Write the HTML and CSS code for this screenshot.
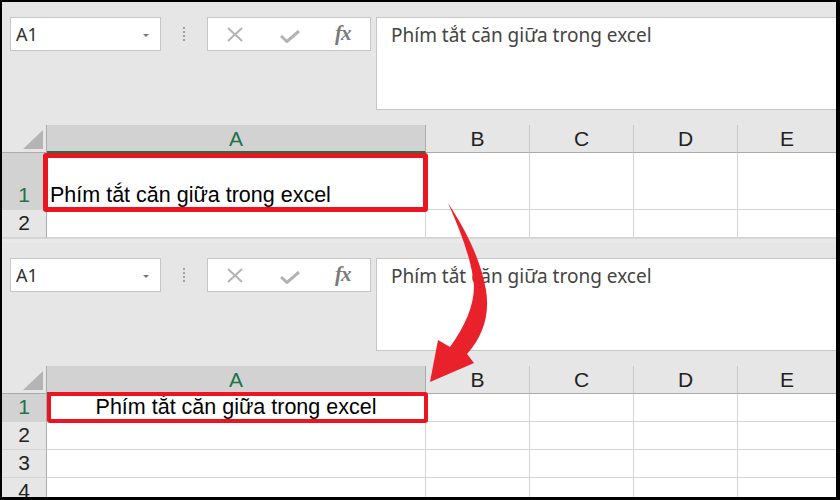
FILE: index.html
```html
<!DOCTYPE html>
<html>
<head>
<meta charset="utf-8">
<link rel="stylesheet" href="styles.css">
</head>
<body>
<div class="frame">
  <div class="panel panel-top">
    <div class="toolbar">
      <div class="namebox"><span class="ref">A1</span><span class="caret"></span></div>
      <div class="grip"><i></i><i></i><i></i><i></i></div>
      <div class="fxbox">
        <svg class="ico-x" width="18" height="15" viewBox="0 0 18 15"><path d="M2 1 L16 14 M16 1 L2 14" stroke="#b3b3b3" stroke-width="2" fill="none"/></svg>
        <svg class="ico-check" width="20" height="13" viewBox="0 0 20 13"><path d="M1 6 L7 11.5 L19 1" stroke="#b3b3b3" stroke-width="3" fill="none"/></svg>
        <span class="fx">fx</span>
      </div>
      <div class="formula">Phím tắt căn giữa trong excel</div>
    </div>
    <div class="grid grid-top">
      <div class="corner"><span class="tri"></span></div>
      <div class="colh sel">A</div>
      <div class="colh">B</div>
      <div class="colh">C</div>
      <div class="colh">D</div>
      <div class="colh last">E</div>

      <div class="rowh sel">1</div>
      <div class="cell a1 a1-top">Phím tắt căn giữa trong excel</div>
      <div class="cell"></div>
      <div class="cell"></div>
      <div class="cell"></div>
      <div class="cell last"></div>

      <div class="rowh">2</div>
      <div class="cell"></div>
      <div class="cell"></div>
      <div class="cell"></div>
      <div class="cell"></div>
      <div class="cell last"></div>
    </div>
  </div>

  <div class="panel panel-bottom">
    <div class="toolbar">
      <div class="namebox"><span class="ref">A1</span><span class="caret"></span></div>
      <div class="grip"><i></i><i></i><i></i><i></i></div>
      <div class="fxbox">
        <svg class="ico-x" width="18" height="15" viewBox="0 0 18 15"><path d="M2 1 L16 14 M16 1 L2 14" stroke="#b3b3b3" stroke-width="2" fill="none"/></svg>
        <svg class="ico-check" width="20" height="13" viewBox="0 0 20 13"><path d="M1 6 L7 11.5 L19 1" stroke="#b3b3b3" stroke-width="3" fill="none"/></svg>
        <span class="fx">fx</span>
      </div>
      <div class="formula">Phím tắt căn giữa trong excel</div>
    </div>
    <div class="grid grid-bottom">
      <div class="corner"><span class="tri"></span></div>
      <div class="colh sel">A</div>
      <div class="colh">B</div>
      <div class="colh">C</div>
      <div class="colh">D</div>
      <div class="colh last">E</div>

      <div class="rowh sel">1</div>
      <div class="cell a1 a1-bottom center">Phím tắt căn giữa trong excel</div>
      <div class="cell"></div>
      <div class="cell"></div>
      <div class="cell"></div>
      <div class="cell last"></div>

      <div class="rowh">2</div>
      <div class="cell"></div>
      <div class="cell"></div>
      <div class="cell"></div>
      <div class="cell"></div>
      <div class="cell last"></div>

      <div class="rowh">3</div>
      <div class="cell"></div>
      <div class="cell"></div>
      <div class="cell"></div>
      <div class="cell"></div>
      <div class="cell last"></div>

      <div class="rowh">4</div>
      <div class="cell"></div>
      <div class="cell"></div>
      <div class="cell"></div>
      <div class="cell"></div>
      <div class="cell last"></div>
    </div>
  </div>

  <svg class="arrow" width="840" height="500" viewBox="0 0 840 500">
    <path d="M448 203 C463 226 480 256 486 290 C490 315 483 336 467 354 L474 363 L430 382 L438 340 L450 347 C465 326 474 306 474 286 C472 260 460 230 448 203 Z" fill="#e8212b"/>
  </svg>
</div>
</body>
</html>
```

FILE: styles.css
```css
* { box-sizing: border-box; }
html, body { margin: 0; padding: 0; }
body { background: #000; }

.frame {
  position: relative;
  width: 840px;
  height: 500px;
  padding: 2px 4px 3px 2px;
  background: #000;
  overflow: hidden;
}

.panel {
  width: 834px;
  background: #e6e6e6;
  overflow: hidden;
}
.panel-top { height: 241px; background: #e9e9e9; }
.panel-bottom { height: 254px; }
.panel-top .toolbar { background: #e6e6e6; }

.toolbar {
  height: 123px;
  display: flex;
  align-items: flex-start;
  padding: 15px 0 0 8px;
}

.namebox {
  width: 151px;
  height: 34px;
  background: #fff;
  border: 1px solid #c6c6c6;
  display: flex;
  align-items: center;
  justify-content: space-between;
  padding: 0 11px 0 5px;
  font-family: "Noto Sans", sans-serif;
  font-size: 18px;
  color: #333;
}
.caret {
  width: 0;
  height: 0;
  border-left: 3px solid transparent;
  border-right: 3px solid transparent;
  border-top: 3px solid #777;
  margin-top: 2px;
}

.grip {
  width: 46px;
  height: 34px;
  display: flex;
  flex-direction: column;
  align-items: center;
  justify-content: center;
  gap: 2px;
}
.grip i {
  display: block;
  width: 2px;
  height: 2px;
  background: #a0a0a0;
}

.fxbox {
  width: 164px;
  height: 34px;
  background: #fff;
  border: 1px solid #c6c6c6;
  display: flex;
  align-items: center;
  padding-left: 18px;
}
.ico-x { margin-top: 1px; }
.ico-check { margin-left: 36px; margin-top: 4px; }
.fx {
  margin-left: 35px;
  font-family: "Liberation Serif", serif;
  font-style: italic;
  font-weight: bold;
  font-size: 21px;
  color: #7a7a7a;
  letter-spacing: -1px;
  margin-top: -2px;
}

.formula {
  margin-left: 5px;
  flex: 1;
  height: 93px;
  background: #fff;
  border: 1px solid #c6c6c6;
  border-right: none;
  padding: 4px 0 0 14px;
  font-family: "Noto Sans", sans-serif;
  font-size: 19px;
  line-height: 26px;
  color: #444;
}

.grid {
  display: grid;
  grid-template-columns: 45px 379px 104px 104px 104px 98px;
  font-family: "Liberation Sans", Arial, sans-serif;
}
.grid-top { grid-template-rows: 28px 57px 28px; border-bottom: 1px solid #d8d8d8; }
.grid-bottom { grid-template-rows: 28px 28px 28px 28px 28px; }

.corner {
  position: relative;
  background: #e6e6e6;
  border-right: 1px solid #ababab;
  border-bottom: 1px solid #ababab;
}
.tri {
  position: absolute;
  right: 3px;
  bottom: 3px;
  width: 0;
  height: 0;
  border-left: 20px solid transparent;
  border-bottom: 19px solid #b4b4b4;
}
.colh {
  background: #e6e6e6;
  border-right: 1px solid #c8c8c8;
  border-bottom: 1px solid #ababab;
  display: flex;
  align-items: center;
  justify-content: center;
  font-size: 21px;
  color: #222;
  padding-top: 1px;
}
.colh.sel {
  background: #d2d2d2;
  color: #217346;
  border-bottom: 2px solid #217346;
  border-right-color: #ababab;
}
.colh.last, .cell.last { border-right: none; }

.rowh {
  background: #e6e6e6;
  border-right: 1px solid #ababab;
  border-bottom: 1px solid #d4d4d4;
  display: flex;
  align-items: flex-end;
  justify-content: center;
  font-size: 21px;
  line-height: 24px;
  padding-bottom: 2px;
  color: #222;
}
.rowh.sel {
  background: #d2d2d2;
  color: #217346;
}

.cell {
  background: #fff;
  border-right: 1px solid #d4d4d4;
  border-bottom: 1px solid #d4d4d4;
  display: flex;
  align-items: flex-end;
  padding: 0 0 2px 3px;
  font-size: 21.5px;
  line-height: 24px;
  color: #000;
  white-space: nowrap;
}
.cell.center { justify-content: center; padding-left: 0; }

.a1 { position: relative; }
.a1::after {
  content: "";
  position: absolute;
  border: 4px solid #ea1520;
  border-radius: 3px;
}
.a1-top::after { top: 0; left: -4px; right: -3px; bottom: -3px; border-width: 5px; }
.a1-bottom::after { top: -2px; left: 0; right: -3px; bottom: -2px; }

.arrow {
  position: absolute;
  left: 0;
  top: 0;
  pointer-events: none;
}
```
